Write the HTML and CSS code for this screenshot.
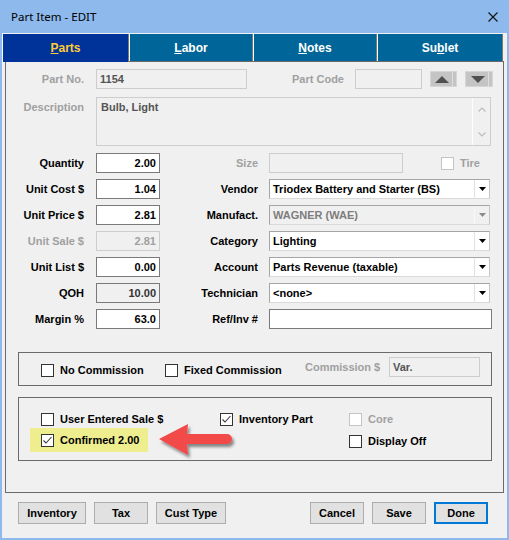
FILE: index.html
```html
<!DOCTYPE html>
<html>
<head>
<meta charset="utf-8">
<link rel="stylesheet" href="styles.css">
</head>
<body>
<div class="window">
  <div class="titlebar">
    <span class="title">Part Item - EDIT</span>
    <svg class="close" width="10" height="10" viewBox="0 0 10 10"><path d="M0.5 0.5 L9.5 9.5 M9.5 0.5 L0.5 9.5" stroke="#111" stroke-width="1.1" fill="none"/></svg>
  </div>
  <div class="tabs">
    <div class="tab active t-parts"><span><u>P</u>arts</span></div>
    <div class="tab t-labor"><span><u>L</u>abor</span></div>
    <div class="tab t-notes"><span><u>N</u>otes</span></div>
    <div class="tab t-sublet"><span>Su<u>b</u>let</span></div>
  </div>
  <div class="panel">
    <div class="row-top">
      <span class="lbl lbl-left dis">Part No.</span>
      <div class="field dis w151">1154</div>
      <span class="lbl dis grow">Part Code</span>
      <div class="field dis w67"></div>
      <div class="spin"><svg width="14" height="7" viewBox="0 0 14 7"><path d="M7 0 L14 7 L0 7 Z" fill="#505050"/></svg></div>
      <div class="spin spin-down"><svg width="14" height="7" viewBox="0 0 14 7"><path d="M0 0 L14 0 L7 7 Z" fill="#505050"/></svg></div>
    </div>
    <div class="row-desc">
      <span class="lbl lbl-left dis desc-lbl">Description</span>
      <div class="textarea">
        <span class="ta-text">Bulb, Light</span>
        <div class="vscroll">
          <svg width="8" height="5" viewBox="0 0 8 5"><path d="M0.5 4.5 L4 1 L7.5 4.5" stroke="#bdbdbd" stroke-width="1.2" fill="none"/></svg>
          <svg width="8" height="5" viewBox="0 0 8 5"><path d="M0.5 0.5 L4 4 L7.5 0.5" stroke="#bdbdbd" stroke-width="1.2" fill="none"/></svg>
        </div>
      </div>
    </div>
    <div class="form-grid">
      <span class="lbl lbl-left">Quantity</span>
      <div class="field num">2.00</div>
      <span class="lbl lbl-mid dis">Size</span>
      <div class="size-cell">
        <div class="field dis w134"></div>
        <span class="box dis tire-box"></span>
        <span class="dis-text tire-lbl">Tire</span>
      </div>

      <span class="lbl lbl-left">Unit Cost $</span>
      <div class="field num">1.04</div>
      <span class="lbl lbl-mid">Vendor</span>
      <div class="select"><span class="sel-text">Triodex Battery and Starter (BS)</span><span class="sel-btn"><svg width="7" height="4" viewBox="0 0 7 4"><path d="M0 0 L7 0 L3.5 4 Z" fill="#000"/></svg></span></div>

      <span class="lbl lbl-left">Unit Price $</span>
      <div class="field num">2.81</div>
      <span class="lbl lbl-mid">Manufact.</span>
      <div class="select sel-dis"><span class="sel-text">WAGNER (WAE)</span><span class="sel-btn"><svg width="7" height="4" viewBox="0 0 7 4"><path d="M0 0 L7 0 L3.5 4 Z" fill="#8a8a8a"/></svg></span></div>

      <span class="lbl lbl-left dis">Unit Sale $</span>
      <div class="field num dis dis-val">2.81</div>
      <span class="lbl lbl-mid">Category</span>
      <div class="select"><span class="sel-text">Lighting</span><span class="sel-btn"><svg width="7" height="4" viewBox="0 0 7 4"><path d="M0 0 L7 0 L3.5 4 Z" fill="#000"/></svg></span></div>

      <span class="lbl lbl-left">Unit List $</span>
      <div class="field num">0.00</div>
      <span class="lbl lbl-mid">Account</span>
      <div class="select"><span class="sel-text">Parts Revenue (taxable)</span><span class="sel-btn"><svg width="7" height="4" viewBox="0 0 7 4"><path d="M0 0 L7 0 L3.5 4 Z" fill="#000"/></svg></span></div>

      <span class="lbl lbl-left">QOH</span>
      <div class="field num ro">10.00</div>
      <span class="lbl lbl-mid">Technician</span>
      <div class="select"><span class="sel-text">&lt;none&gt;</span><span class="sel-btn"><svg width="7" height="4" viewBox="0 0 7 4"><path d="M0 0 L7 0 L3.5 4 Z" fill="#000"/></svg></span></div>

      <span class="lbl lbl-left">Margin %</span>
      <div class="field num">63.0</div>
      <span class="lbl lbl-mid">Ref/Inv #</span>
      <div class="field w223"></div>
    </div>

    <div class="group commission">
      <label class="chk w124"><span class="box"></span><span>No Commission</span></label>
      <label class="chk w140"><span class="box"></span><span>Fixed Commission</span></label>
      <span class="dis-text comm-lbl">Commission $</span>
      <div class="field dis w91 var">Var.</div>
    </div>

    <div class="group options">
      <label class="chk pad"><span class="box"></span><span>User Entered Sale $</span></label>
      <label class="chk"><span class="box"><svg width="11" height="11" viewBox="0 0 11 11"><path d="M1.5 5.5 L4 8 L9.5 2" stroke="#3a3a3a" stroke-width="1.1" fill="none"/></svg></span><span>Inventory Part</span></label>
      <label class="chk"><span class="box dis"></span><span class="dis-text">Core</span></label>
      <label class="chk pad hl"><span class="box"><svg width="11" height="11" viewBox="0 0 11 11"><path d="M1.5 5.5 L4 8 L9.5 2" stroke="#3a3a3a" stroke-width="1.1" fill="none"/></svg></span><span>Confirmed 2.00</span></label>
      <span></span>
      <label class="chk"><span class="box"></span><span>Display Off</span></label>
    </div>
  </div>
  <div class="footer">
    <div class="btn-group">
      <div class="btn w68">Inventory</div>
      <div class="btn w54">Tax</div>
      <div class="btn w70">Cust Type</div>
    </div>
    <div class="btn-group">
      <div class="btn w54">Cancel</div>
      <div class="btn w54">Save</div>
      <div class="btn w54 default">Done</div>
    </div>
  </div>
  <svg class="arrow" width="100" height="50" viewBox="0 0 100 50">
    <defs>
      <filter id="sh" x="-20%" y="-30%" width="150%" height="170%">
        <feDropShadow dx="2" dy="3" stdDeviation="1.6" flood-color="#000" flood-opacity="0.45"/>
      </filter>
    </defs>
    <path d="M9 24 L38 9 L37 19 L77 19 A5 5 0 0 1 77 29 L37 29 L38 40 Z" fill="#f24848" filter="url(#sh)"/>
  </svg>
</div>
</body>
</html>
```

FILE: styles.css
```css
* { box-sizing: border-box; }

body {
  margin: 0;
  font-family: "Liberation Sans", Arial, sans-serif;
  font-size: 11px;
  font-weight: bold;
  color: #000;
}

.window {
  position: relative;
  width: 509px;
  height: 540px;
  background: #f0f0f0;
  border: 2px solid #8db9ed;
  border-top: 0;
  display: flex;
  flex-direction: column;
}

.titlebar {
  height: 33px;
  flex: none;
  background: #8db9ed;
  display: flex;
  align-items: center;
  justify-content: space-between;
  padding: 0 9px 0 9px;
}

.title {
  font-family: "Noto Sans", "Open Sans", sans-serif;
  font-weight: normal;
  font-size: 11.5px;
  color: #000;
}

.tabs {
  display: flex;
  height: 27px;
  margin-top: 1px;
  flex: none;
}

.tab {
  height: 27px;
  background: #006699;
  color: #fff;
  font-size: 12px;
  font-weight: bold;
  border-left: 1px solid #fbfbfb;
  border-right: 1px solid #7a7a7a;
  display: flex;
  align-items: center;
  justify-content: center;
}

.tab.active {
  background: #003399;
  color: #ffcc33;
  height: 28px;
  position: relative;
  z-index: 1;
}

.t-parts { width: 127px; }
.t-labor { width: 124px; }
.t-notes { width: 124px; }
.t-sublet { width: 126px; }

.panel {
  margin: 0 3px;
  height: 432px;
  flex: none;
  border: 1px solid #6a6a6a;
  padding: 7px 10px 0 0;
}

.lbl {
  text-align: right;
  white-space: nowrap;
}

.lbl-left {
  width: 90px;
  flex: none;
  padding-right: 12px;
}

.lbl-mid {
  padding-right: 11px;
}

.dis { color: #a0a0a0; }
.dis-text { color: #a0a0a0; }

.grow { flex: 1; padding-right: 11px; }

.row-top {
  display: flex;
  align-items: center;
  height: 20px;
}

.field {
  height: 20px;
  border: 1px solid #7a7a7a;
  background: #fff;
  padding: 0 3px;
  line-height: 18px;
  white-space: nowrap;
  overflow: hidden;
}

.field.dis {
  border-color: #cdcdcd;
  background: #f0f0f0;
  color: #555;
}

.field.dis-val { color: #a0a0a0; }

.field.ro {
  background: #f0f0f0;
  color: #333;
}

.num { text-align: right; }

.w151 { width: 151px; flex: none; }
.w67 { width: 67px; flex: none; }
.w134 { width: 134px; flex: none; }
.w223 { width: 223px; }
.w91 { width: 91px; flex: none; }

.spin {
  width: 27px;
  height: 16px;
  flex: none;
  margin-left: 8px;
  background: #c4c4c4;
  border: 1px solid #d6d6d6;
  box-shadow: inset -3px 0 0 #c4c4c4, inset -4px 0 0 #dedede;
  display: flex;
  align-items: center;
  justify-content: center;
  padding-right: 3px;
}

.spin-down { width: 28px; }

.row-desc {
  display: flex;
  align-items: flex-start;
  margin-top: 8px;
}

.desc-lbl { padding-top: 4px; }

.textarea {
  width: 395px;
  height: 49px;
  border: 1px solid #cdcdcd;
  background: #f0f0f0;
  display: flex;
}

.ta-text {
  flex: 1;
  color: #555;
  padding: 3px 0 0 4px;
}

.vscroll {
  width: 18px;
  border-left: 1px solid #fdfdfd;
  display: flex;
  flex-direction: column;
  align-items: center;
  justify-content: space-between;
  padding: 9px 0 8px;
}

.vscroll svg { display: block; }

.form-grid {
  margin-top: 7px;
  display: grid;
  grid-template-columns: 90px 64px 109px 223px;
  grid-auto-rows: 20px;
  row-gap: 6px;
  align-items: center;
}

.size-cell {
  display: flex;
  align-items: center;
}

.box {
  width: 13px;
  height: 13px;
  flex: none;
  border: 1px solid #333;
  background: #fff;
  display: inline-flex;
  align-items: center;
  justify-content: center;
}

.box.dis {
  border-color: #c4c4c4;
}

.tire-box { margin-left: 38px; }
.tire-lbl { margin-left: 6px; }

.select {
  width: 221px;
  height: 20px;
  border: 1px solid #a5a5a5;
  border-bottom-color: #dadada;
  border-right-color: #c6c6c6;
  background: #fff;
  display: flex;
  align-items: center;
}

.sel-text {
  flex: 1;
  padding-left: 3px;
  white-space: nowrap;
  overflow: hidden;
}

.sel-btn {
  width: 15px;
  height: 100%;
  border-left: 1px solid #e1e1e1;
  display: flex;
  align-items: center;
  justify-content: center;
}

.sel-dis { background: #f0f0f0; }
.sel-dis .sel-text { color: #7d7d7d; }
.sel-dis .sel-btn { border-left-color: #f8f8f8; }

.group {
  margin-left: 12px;
  width: 474px;
  border: 1px solid #6a6a6a;
}

.commission {
  margin-top: 23px;
  height: 34px;
  display: flex;
  align-items: flex-start;
  padding: 4px 0 0 22px;
}

.chk {
  display: flex;
  align-items: center;
  gap: 6px;
  white-space: nowrap;
}

.commission .chk {
  height: 20px;
  margin-top: 3px;
}

.w124 { width: 124px; flex: none; }
.w140 { width: 140px; flex: none; }

.comm-lbl {
  width: 84px;
  flex: none;
  height: 20px;
  line-height: 20px;
  white-space: nowrap;
}

.var { color: #666; }

.options {
  margin-top: 11px;
  height: 64px;
  display: grid;
  grid-template-columns: 190px 129px auto;
  grid-auto-rows: 22px;
  align-items: center;
  padding: 10px 0 0 11px;
}

.options .chk { justify-self: start; }

.pad { padding-left: 11px; }

.hl {
  background: #eeee8e;
  height: 24px;
  padding-right: 9px;
  margin-top: -2px;
}

.footer {
  flex: none;
  height: 45px;
  display: flex;
  justify-content: space-between;
  padding: 9px 19px 0 16px;
}

.btn-group {
  display: flex;
  gap: 8px;
}

.btn {
  height: 22px;
  background: #e1e1e1;
  border: 1px solid #adadad;
  display: flex;
  align-items: center;
  justify-content: center;
}

.btn.default { border: 2px solid #0078d7; }

.w68 { width: 68px; }
.w54 { width: 54px; }
.w70 { width: 70px; }

.arrow {
  position: absolute;
  left: 148px;
  top: 415px;
}
```
